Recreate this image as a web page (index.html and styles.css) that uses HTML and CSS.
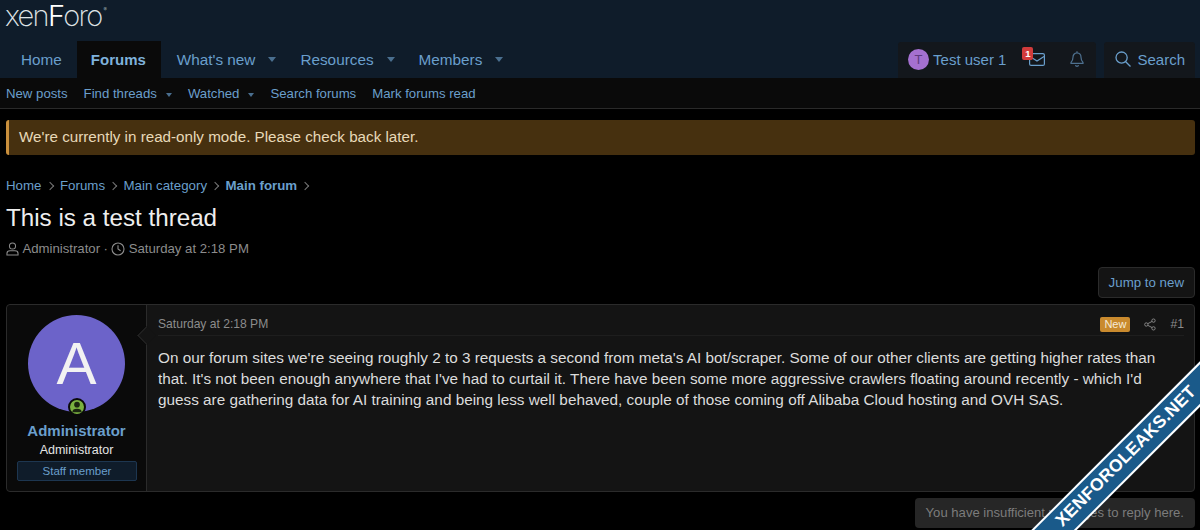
FILE: index.html
```html
<!DOCTYPE html>
<html lang="en">
<head>
    <meta charset="utf-8" />
    <title>This is a test thread</title>
    <link rel="stylesheet" href="styles.css">
</head>
<body>
    <header class="topbar">
        <div class="logo">xen<span class="logo-f">F</span>oro<sup>®</sup></div>
        <nav class="nav">
            <div class="nav-tabs">
                <a class="tab" href="#">Home</a>
                <a class="tab current" href="#">Forums</a>
                <a class="tab" href="#">What's new<i class="caret"></i></a>
                <a class="tab" href="#">Resources<i class="caret"></i></a>
                <a class="tab" href="#">Members<i class="caret"></i></a>
            </div>
            <div class="nav-right">
                <div class="nav-group">
                    <a class="user" href="#"><span class="user-pic">T</span>Test user 1</a>
                    <a class="nav-icon" href="#">
                        <span class="badge">1</span>
                        <svg width="16" height="13" viewBox="0 0 16 13" fill="none" stroke="currentColor" stroke-width="1.2"><rect x=".6" y=".6" width="14.800" height="11.800" rx="1.500"/><path d="M1 3.500 8 8l7-4.500"/></svg>
                    </a>
                    <a class="nav-icon bell" href="#">
                        <svg width="14" height="16" viewBox="0 0 14 16" fill="none" stroke="currentColor" stroke-width="1.2"><path d="M7 2C4.500 2 3 3.900 3 6.300c0 2.900-.8 4-2 5.200v.8h12v-.8c-1.200-1.200-2-2.300-2-5.200C11 3.900 9.500 2 7 2z"/><path d="M7 .3V2M5.600 14a1.400 1.400 0 0 0 2.800 0"/></svg>
                    </a>
                </div>
                <a class="nav-group search" href="#">
                    <svg width="16" height="16" viewBox="0 0 16 16" fill="none" stroke="currentColor" stroke-width="1.300"><circle cx="6.600" cy="6.600" r="5.600"/><path d="m10.700 10.700 4.800 4.800"/></svg>
                    Search
                </a>
            </div>
        </nav>
    </header>

    <div class="subnav">
        <a href="#">New posts</a>
        <a href="#">Find threads<i class="caret small"></i></a>
        <a href="#">Watched<i class="caret small"></i></a>
        <a href="#">Search forums</a>
        <a href="#">Mark forums read</a>
    </div>

    <main class="content">
        <div class="notice">We're currently in read-only mode. Please check back later.</div>

        <ul class="crumbs">
            <li><a href="#">Home</a></li>
            <li><a href="#">Forums</a></li>
            <li><a href="#">Main category</a></li>
            <li><a class="last" href="#">Main forum</a></li>
        </ul>

        <h1 class="title">This is a test thread</h1>
        <div class="meta">
            <svg width="13" height="14" viewBox="0 0 14 15" fill="none" stroke="currentColor" stroke-width="1.100"><circle cx="7" cy="4.300" r="3.300"/><path d="M1 14v-1.500C1 10.500 2.500 9.500 4.300 9.500h5.400c1.800 0 3.300 1 3.300 3V14z"/></svg>
            <span>Administrator</span>
            <span>·</span>
            <svg width="14" height="14" viewBox="0 0 14 14" fill="none" stroke="currentColor" stroke-width="1.100"><circle cx="7" cy="7" r="6"/><path d="M7 3.200V7l2.600 1.700"/></svg>
            <span>Saturday at 2:18 PM</span>
        </div>

        <div class="actions"><a class="button" href="#">Jump to new</a></div>

        <article class="post">
            <aside class="post-user">
                <div class="avatar">A
                    <span class="online"><svg width="12" height="12" viewBox="0 0 14 14" fill="#1a2410"><circle cx="7" cy="4.300" r="3.300"/><path d="M1.500 13c0-2.800 2.200-4 5.500-4s5.500 1.200 5.500 4z"/></svg></span>
                </div>
                <a class="user-name" href="#">Administrator</a>
                <div class="user-title">Administrator</div>
                <div class="banner">Staff member</div>
            </aside>
            <div class="post-main">
                <div class="post-head">
                    <span class="post-date">Saturday at 2:18 PM</span>
                    <span class="post-tools">
                        <span class="new">New</span>
                        <svg width="12" height="13" viewBox="0 0 13 13" fill="none" stroke="currentColor" stroke-width="1"><circle cx="10.300" cy="2.300" r="1.800"/><circle cx="2.500" cy="6.500" r="1.800"/><circle cx="10.300" cy="10.700" r="1.800"/><path d="M4.100 5.600 8.700 3.200M4.100 7.400l4.600 2.400"/></svg>
                        <span class="post-num">#1</span>
                    </span>
                </div>
                <p class="post-body">On our forum sites we're seeing roughly 2 to 3 requests a second from meta's AI bot/scraper. Some of our other clients are getting higher rates than that. It's not been enough anywhere that I've had to curtail it. There have been some more aggressive crawlers floating around recently - which I'd guess are gathering data for AI training and being less well behaved, couple of those coming off Alibaba Cloud hosting and OVH SAS.</p>
            </div>
        </article>

        <div class="actions"><span class="blocked">You have insufficient privileges to reply here.</span></div>
    </main>

    <div class="ribbon-clip">
        <div class="ribbon"><span class="ribbon-text">XENFOROLEAKS.NET</span></div>
    </div>
</body>
</html>
```

FILE: styles.css
```css
* {
    margin: 0;
    padding: 0;
    box-sizing: border-box;
}

html, body {
    height: 530px;
    overflow: hidden;
}

body {
    position: relative;
    background-color: #000;
    color: #e4e4e4;
    font-family: "Liberation Sans", Arial, sans-serif;
    font-size: 15px;
    line-height: 21px;
}

a {
    color: #6a9fcc;
    text-decoration: none;
}

.topbar {
    background-color: #0f1c2a;
}

.logo {
    height: 41px;
    padding-left: 5px;
    color: #dfe3e6;
    font-family: Inter, sans-serif;
    font-size: 29px;
    font-weight: 200;
    line-height: 31px;
    letter-spacing: -1.700px;
}

.logo-f {
    color: #fff;
    font-weight: 300;
}

.logo sup {
    margin-left: 2px;
    font-size: 5px;
    line-height: 0;
    vertical-align: 15px;
}

.nav {
    display: flex;
    justify-content: space-between;
    height: 37px;
}

.nav-tabs {
    display: flex;
    padding-left: 6px;
}

.tab {
    display: flex;
    align-items: center;
    padding: 0 15px;
    font-size: 15.300px;
}

.tab.current {
    margin-right: 1px;
    padding: 0 15px 0 14px;
    background-color: #0a0a0a;
    color: #7fb2dc;
    font-size: 15px;
    font-weight: bold;
}

.caret {
    display: inline-block;
    width: 0;
    height: 0;
    margin: 0 -6px 0 13px;
    border-left: 4.500px solid transparent;
    border-right: 4.500px solid transparent;
    border-top: 5px solid #4a6f8f;
}

.caret.small {
    margin: 0 0 1px 9px;
    border-left-width: 3.500px;
    border-right-width: 3.500px;
    border-top-width: 4px;
}

.nav-right {
    display: flex;
    gap: 8px;
    padding-right: 5px;
}

.nav-group {
    display: flex;
    align-items: center;
    height: 36px;
    margin-top: 1px;
    padding-bottom: 2px;
    background-color: #13171c;
    border-radius: 3px 3px 0 0;
}

.user {
    display: flex;
    align-items: center;
    gap: 4px;
    padding-left: 10px;
}

.user-pic {
    width: 21px;
    height: 21px;
    border-radius: 50%;
    background-color: #a470d0;
    color: #5d3a80;
    font-size: 13px;
    line-height: 21px;
    text-align: center;
}

.nav-icon {
    position: relative;
    display: flex;
    align-items: center;
    margin-left: 23px;
    color: #6a9fcc;
}

.nav-icon.bell {
    margin: 0 12px 0 25px;
    color: #4e7190;
}

.badge {
    position: absolute;
    top: -6px;
    left: -7px;
    width: 11px;
    height: 13px;
    background-color: #d13b3b;
    border-radius: 2px;
    color: #fff;
    font-size: 9.500px;
    font-weight: bold;
    line-height: 13px;
    text-align: center;
}

.search {
    gap: 6px;
    padding: 0 10px 2px 11px;
}

.subnav {
    display: flex;
    gap: 16px;
    height: 31px;
    padding: 5px 6px 0;
    background-color: #0a0a0a;
    border-bottom: 1px solid #2a2a2a;
    font-size: 13.200px;
}

.content {
    padding: 11px 5px 0 6px;
}

.notice {
    height: 35px;
    padding-left: 10px;
    background-color: #46300f;
    border-left: 3px solid #c98f3c;
    border-radius: 3px;
    color: #e8d9b8;
    font-size: 15.200px;
    line-height: 34px;
}

.crumbs {
    display: flex;
    margin-top: 20px;
    list-style-type: none;
    font-size: 13.300px;
}

.crumbs li::after {
    content: "";
    display: inline-block;
    width: 5px;
    height: 5px;
    margin: 0 7.300px 1px 5.200px;
    border-top: 1px solid #777;
    border-right: 1px solid #777;
    transform: rotate(45deg);
}

.crumbs .last {
    font-weight: bold;
}

.title {
    margin-top: 5px;
    color: #eee;
    font-size: 24.200px;
    font-weight: normal;
    line-height: 34px;
}

.meta {
    display: flex;
    align-items: center;
    gap: 3.400px;
    margin-top: 3px;
    color: #8c8c8c;
    font-size: 13.200px;
}

.actions {
    display: flex;
    justify-content: flex-end;
}

.button {
    height: 31px;
    margin-top: 8px;
    padding: 0 10px;
    background-color: #141414;
    border: 1px solid #2b2b2b;
    border-radius: 4px;
    font-size: 13.300px;
    line-height: 29px;
}

.post {
    display: flex;
    height: 188px;
    margin-top: 6px;
    background-color: #141414;
    border: 1px solid #2b2b2b;
    border-radius: 4px;
}

.post-user {
    position: relative;
    flex: none;
    width: 140px;
    padding: 10px 10px 0;
    background-color: #0a0a0a;
    border-right: 1px solid #2b2b2b;
    border-radius: 4px 0 0 4px;
    text-align: center;
}

.post-user::after {
    content: "";
    position: absolute;
    top: 24px;
    right: -6.500px;
    width: 12px;
    height: 12px;
    background-color: #141414;
    border-left: 1px solid #262626;
    border-bottom: 1px solid #262626;
    transform: rotate(45deg);
}

.avatar {
    position: relative;
    width: 97px;
    height: 97px;
    margin: 0 auto;
    border-radius: 50%;
    background-color: #6c63c9;
    color: #f2f2f2;
    font-size: 60px;
    line-height: 97px;
}

.online {
    position: absolute;
    left: 39.500px;
    top: 83px;
    display: flex;
    align-items: center;
    justify-content: center;
    width: 18px;
    height: 18px;
    border: 2px solid #0a0a0a;
    border-radius: 50%;
    background-color: #7ab040;
}

.user-name {
    display: block;
    margin-top: 9px;
    font-size: 15px;
    font-weight: bold;
    line-height: 20px;
}

.user-title {
    color: #e4e4e4;
    font-size: 12.500px;
    line-height: 18px;
}

.banner {
    height: 20px;
    margin: 2px -1px 0 0;
    background-color: #0f1c2a;
    border: 1px solid #1d3650;
    border-radius: 2px;
    color: #6a9fcc;
    font-size: 11.500px;
    line-height: 18px;
}

.post-main {
    flex: 1;
    padding: 0 10px 0 11px;
}

.post-head {
    display: flex;
    justify-content: space-between;
    align-items: center;
    height: 31px;
    padding-top: 8px;
    border-bottom: 1px solid #1e1e1e;
    color: #8c8c8c;
    font-size: 12.100px;
}

.post-tools {
    display: flex;
    align-items: center;
    gap: 14px;
}

.post-num {
    font-size: 12.200px;
}

.new {
    padding: 0 4px;
    background-color: #c98a2e;
    border-radius: 2px;
    color: #f6ecd8;
    font-size: 11px;
    line-height: 15px;
}

.post-body {
    margin-top: 11px;
    color: #dcdcdc;
    font-size: 15.300px;
    line-height: 21px;
}

.blocked {
    height: 30px;
    margin-top: 6px;
    padding: 0 11px;
    background-color: #262626;
    border-radius: 4px;
    color: #7c7c7c;
    font-size: 13.100px;
    line-height: 30px;
}

.ribbon-clip {
    position: absolute;
    left: 0;
    top: 0;
    width: 1200px;
    height: 530px;
    overflow: hidden;
    pointer-events: none;
}

.ribbon {
    position: absolute;
    left: 988px;
    top: 440px;
    display: flex;
    justify-content: center;
    align-items: flex-start;
    width: 280px;
    height: 32px;
    background-color: #1a5a8a;
    border-top: 2px solid #fff;
    border-bottom: 2px solid #fff;
    transform: rotate(-45deg);
}

.ribbon-text {
    margin: 5px 3px 0 0;
    color: #fff;
    font-size: 17.500px;
    font-weight: bold;
    letter-spacing: 0.300px;
    line-height: 15px;
}
```
